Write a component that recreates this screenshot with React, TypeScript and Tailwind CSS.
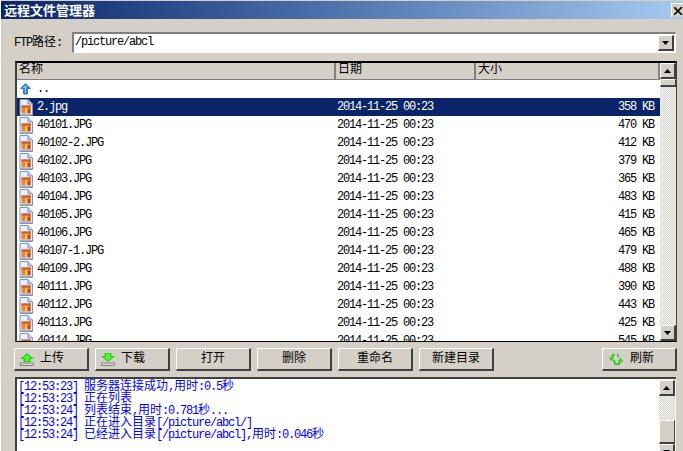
import type { ReactNode } from "react";

type FileRow = { name: string; size: string };

const files: FileRow[] = [
  { name: "2.jpg", size: "358" },
  { name: "40101.JPG", size: "470" },
  { name: "40102-2.JPG", size: "412" },
  { name: "40102.JPG", size: "379" },
  { name: "40103.JPG", size: "365" },
  { name: "40104.JPG", size: "483" },
  { name: "40105.JPG", size: "415" },
  { name: "40106.JPG", size: "465" },
  { name: "40107-1.JPG", size: "479" },
  { name: "40109.JPG", size: "488" },
  { name: "40111.JPG", size: "390" },
  { name: "40112.JPG", size: "443" },
  { name: "40113.JPG", size: "425" },
  { name: "40114.JPG", size: "545" },
];

const logLines = [
  ["[12:53:23]", "服务器连接成功,用时:0.5秒"],
  ["[12:53:23]", "正在列表"],
  ["[12:53:24]", "列表结束,用时:0.781秒..."],
  ["[12:53:24]", "正在进入目录[/picture/abcl/]"],
  ["[12:53:24]", "已经进入目录[/picture/abcl],用时:0.046秒"],
];

// latin runs sit on a half-em grid like the old bitmap font, so split them from the CJK runs
function T({ children }: { children: string }) {
  const parts = children.match(/[\u4e00-\u9fff]+|[^\u4e00-\u9fff]+/g) ?? [];
  return (
    <>
      {parts.map((p, i) =>
        /[\u4e00-\u9fff]/.test(p) ? (
          <span key={i} className="font-['Noto_Sans_CJK_SC',sans-serif] text-[12px]">{p}</span>
        ) : (
          <span key={i} className="whitespace-pre font-['Liberation_Mono',monospace] text-[12px] tracking-[-1.2px]">{p}</span>
        )
      )}
    </>
  );
}

function FileIcon() {
  return (
    <svg width="14" height="17" viewBox="0 0 14 17" className="shrink-0">
      <path d="M1 .5H9L13.5 5V16.5H1Z" fill="#e8f0fc" stroke="#7f94bd" />
      <path d="M1.5 15.5H13" stroke="#9fb0d0" />
      <path d="M9 .5V5H13.5" fill="#b9c9e8" stroke="#7f94bd" />
      <rect x="2.5" y="6.5" width="9.5" height="8" fill="#e8833a" />
      <rect x="2.5" y="6.5" width="9.5" height="2" fill="#d9582a" />
      <rect x="6" y="9" width="2" height="5" fill="#f6c765" />
      <rect x="9" y="10" width="2" height="4" fill="#b8481f" />
    </svg>
  );
}

function UpDirIcon() {
  return (
    <svg width="11" height="12" viewBox="0 0 11 12" className="shrink-0">
      <path d="M5.5 .5L10.5 5.5H7.5V11H3.5V5.5H.5Z" fill="#2f8ae0" stroke="#1b5fae" strokeWidth=".7" />
      <path d="M5.5 2L3 5H5V10H6V5H7Z" fill="#8cc8f6" />
    </svg>
  );
}

function UploadIcon() {
  return (
    <svg width="14" height="13" viewBox="0 0 14 13">
      <path d="M7 0L14 6H10.5V9H3.5V6H0Z" fill="#22d414" />
      <path d="M7 1.5L3 5H5V8H9V5H11Z" fill="#5ef03a" />
      <rect x=".5" y="10" width="13" height="2.5" fill="#dcd8d0" stroke="#77736a" strokeWidth=".8" />
    </svg>
  );
}

function DownloadIcon() {
  return (
    <svg width="14" height="13" viewBox="0 0 14 13">
      <path d="M3.5 0H10.5V3H14L7 9L0 3H3.5Z" fill="#22d414" />
      <path d="M5 1H9V4H11L7 7.5L3 4H5Z" fill="#5ef03a" />
      <rect x=".5" y="10" width="13" height="2.5" fill="#dcd8d0" stroke="#77736a" strokeWidth=".8" />
    </svg>
  );
}

function RefreshIcon() {
  return (
    <svg width="16" height="13" viewBox="0 0 16 13">
      <path d="M6.5 0.5C4 1 3 2.5 3 4.5H0.5L3.5 8L6.5 4.5H5C5 3.5 5.8 3 6.5 3Z" fill="#22c814" />
      <path d="M3 4.5L3.5 6.5L4.5 4.5Z" fill="#c8f020" />
      <path d="M5 7C5 9.5 6.5 12 9 12.5V10.5C7.5 10 7 9 7 7Z" fill="#22c814" />
      <path d="M9.5 12.5C12 12 13 10.5 13 8.5H15.5L12.5 5L9.5 8.5H11C11 9.5 10.2 10 9.5 10Z" fill="#22c814" />
      <path d="M13 8.5L12.5 6.5L11.5 8.5Z" fill="#c8f020" />
      <path d="M9 0.5C10 1 11 2 11 5L9 3Z" fill="#22c814" />
    </svg>
  );
}

function Arrow({ up }: { up?: boolean }) {
  return (
    <svg width="7" height="4" viewBox="0 0 7 4">
      <path d={up ? "M3.5 0L7 4H0Z" : "M0 0H7L3.5 4Z"} fill="#000" />
    </svg>
  );
}

function ScrollBtn({ up, className }: { up?: boolean; className: string }) {
  return (
    <div className={`flex shrink-0 items-center justify-center border-t border-l border-t-white border-l-white border-r-2 border-b-2 border-r-[#404040] border-b-[#404040] bg-[#d4d0c8] ${className}`}>
      <Arrow up={up} />
    </div>
  );
}

function Thumb({ className }: { className: string }) {
  return <div className={`shrink-0 border-t border-l border-t-white border-l-white border-r border-b-2 border-r-[#404040] border-b-[#404040] bg-[#d4d0c8] ${className}`} />;
}

const dither = "bg-[repeating-conic-gradient(#d4d0c8_0_25%,#ffffff_0_50%)] bg-[length:2px_2px]";

function ToolButton({ label, icon }: { label: string; icon?: ReactNode }) {
  return (
    <button className={`flex h-[23px] w-[75px] items-center border-t border-l border-t-white border-l-white border-r-2 border-b-2 border-r-[#404040] border-b-[#404040] bg-[#d4d0c8] text-black ${icon ? "justify-start pl-[5px]" : "justify-center"}`}>
      {icon && <span className="mr-[6px] flex">{icon}</span>}
      <span className="mb-[6px] block leading-[12px]"><T>{label}</T></span>
    </button>
  );
}

function HeaderCell({ label, className }: { label: string; className: string }) {
  return (
    <div className={`h-[17px] border-r-2 border-r-[#808080] pl-[2px] text-[12px] leading-[10px] ${className}`}>
      <T>{label}</T>
    </div>
  );
}

export default function App() {
  return (
    <div className="flex h-[451px] w-[683px] flex-col overflow-hidden border-l border-l-white bg-[#d4d0c8] text-black">
      {/* title bar */}
      <div className="mt-px flex h-[18px] shrink-0 items-center bg-gradient-to-r from-[#0a246a] to-[#a6caf0] pl-[3px]">
        <span className="mb-[2px] flex-1 font-['Noto_Sans_CJK_SC',sans-serif] text-[13px] font-bold leading-none text-white">远程文件管理器</span>
        <div className="flex h-[14px] w-[12px] items-center overflow-hidden border-t border-l border-t-white border-l-white bg-[#d4d0c8] pl-[2px]">
          <svg width="9" height="8" viewBox="0 0 9 8">
            <path d="M0 0L8 8M8 0L0 8" stroke="#000" strokeWidth="1.6" />
          </svg>
        </div>
      </div>

      {/* path row */}
      <div className="mt-[13px] flex h-[21px] shrink-0 items-center pl-[13px] pr-[7px]">
        <span className="mb-[2px] w-[58px] text-[12px] leading-[12px]"><T>FTP路径:</T></span>
        <div className="flex h-[21px] flex-1 items-center border-t-2 border-l-2 border-t-[#808080] border-l-[#808080] border-r border-b border-r-white border-b-white bg-white pl-px pr-px">
          <span className="mb-[3px] flex-1 text-[12px] leading-[12px]"><T>/picture/abcl</T></span>
          <ScrollBtn className="h-[16px] w-[16px]" />
        </div>
      </div>

      {/* file list */}
      <div className="mx-[14px] mt-[8px] flex h-[281px] w-[662px] shrink-0 overflow-hidden border-t-2 border-l-2 border-b border-t-black border-l-[#404040] border-b-black border-r border-r-[#404040] bg-white">
        <div className="min-w-0 flex-1 overflow-hidden">
          <div className="flex h-[17px] border-b border-b-[#808080] bg-[#d4d0c8]">
            <HeaderCell label="名称" className="w-[319px]" />
            <HeaderCell label="日期" className="w-[140px]" />
            <HeaderCell label="大小" className="flex-1 border-r-0" />
          </div>
          <div className="flex h-[18px] items-center pl-[3px]">
            <UpDirIcon />
            <span className="mb-[2px] ml-[6px] text-[12px] leading-[12px]"><T>..</T></span>
          </div>
          {files.map((f, i) => (
            <div key={f.name} className={`flex h-[18px] items-center text-[12px] ${i === 0 ? "bg-[#0a246a] text-white" : ""}`}>
              <div className="flex w-[320px] items-center pl-[2px]">
                <FileIcon />
                <span className="mb-[2px] ml-[4px] leading-[12px]"><T>{f.name}</T></span>
              </div>
              <span className="mb-[2px] w-[250px] leading-[12px]"><T>2014-11-25 00:23</T></span>
              <span className="mb-[2px] w-[67px] text-right leading-[12px]"><T>{`${f.size} KB`}</T></span>
            </div>
          ))}
        </div>
        <div className="flex w-[16px] shrink-0 flex-col">
          <ScrollBtn up className="h-[16px] w-[16px]" />
          <Thumb className="h-[8px] w-[16px]" />
          <div className={`flex-1 ${dither}`} />
          <ScrollBtn className="h-[16px] w-[16px]" />
        </div>
      </div>

      {/* buttons */}
      <div className="mt-[6px] flex shrink-0 gap-[6px] pl-[13px] pr-[6px]">
        <ToolButton label="上传" icon={<UploadIcon />} />
        <ToolButton label="下载" icon={<DownloadIcon />} />
        <ToolButton label="打开" />
        <ToolButton label="删除" />
        <ToolButton label="重命名" />
        <ToolButton label="新建目录" />
        <div className="ml-auto">
          <ToolButton label="刷新" icon={<RefreshIcon />} />
        </div>
      </div>

      {/* log */}
      <div className="mx-[14px] mt-[6px] flex min-h-0 w-[661px] flex-1 overflow-hidden border-t-2 border-l-2 border-t-[#404040] border-l-[#404040] bg-white">
        <div className="-mt-px min-w-0 flex-1 pl-px text-[#0000ff]">
          {logLines.map(([time, msg], i) => (
            <div key={i} className="flex h-[12px] gap-[6px] whitespace-nowrap leading-[12px]">
              <span><T>{time}</T></span>
              <span><T>{msg}</T></span>
            </div>
          ))}
        </div>
        <div className="flex w-[17px] shrink-0 flex-col pt-[1px]">
          <ScrollBtn up className="h-[16px] w-[16px]" />
          <div className={`h-[24px] shrink-0 w-[16px] ${dither}`} />
          <Thumb className="h-[24px] w-[16px]" />
          <ScrollBtn className="h-[16px] w-[16px]" />
        </div>
      </div>
    </div>
  );
}
